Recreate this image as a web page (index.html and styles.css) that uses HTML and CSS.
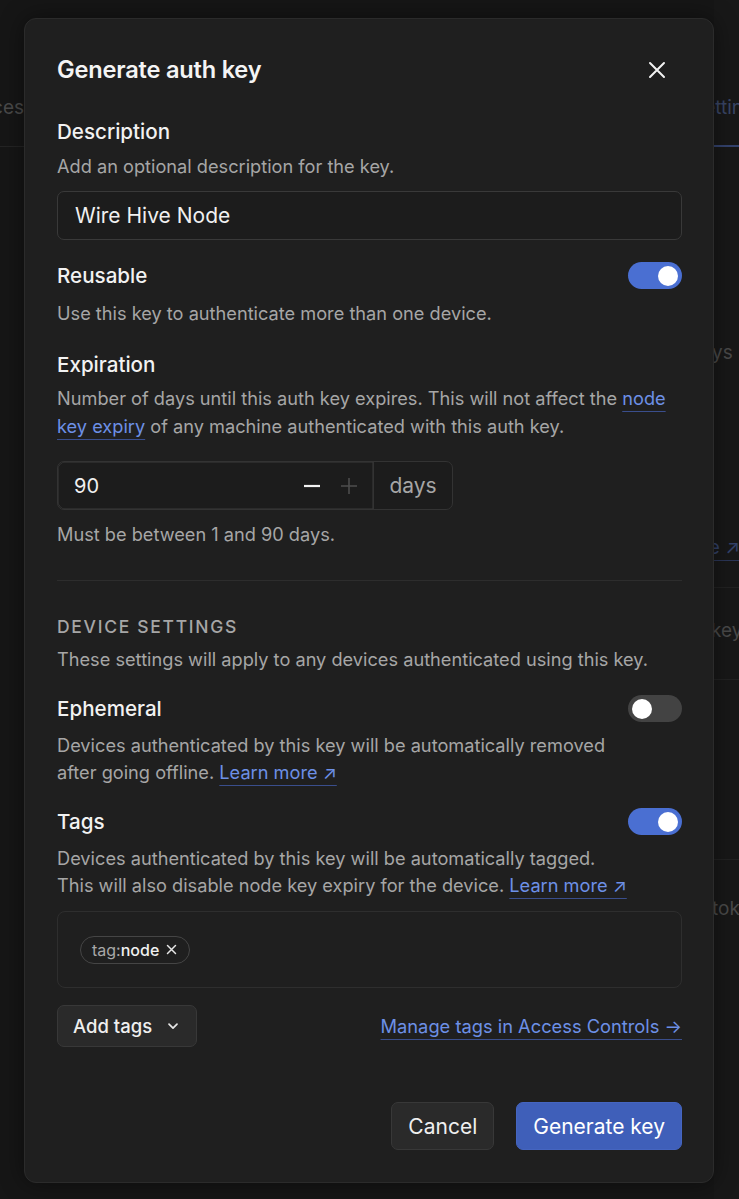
FILE: index.html
```html
<!DOCTYPE html>
<html lang="en">
<head>
<meta charset="utf-8">
<title>Generate auth key</title>
<link rel="stylesheet" href="styles.css">
</head>
<body>
<div class="page">
  <div class="side side-left">
    <div class="bg-tab">Devices</div>
    <div class="bg-rule"></div>
  </div>
  <div class="side side-right">
    <div class="bg-tab bg-tab-active">Settings</div>
    <div class="bg-active-bar"></div>
    <div class="bg-text bg-ys">days</div>
    <div class="bg-link">more ↗</div>
    <div class="bg-rule bg-rule-1"></div>
    <div class="bg-text bg-key">key</div>
    <div class="bg-rule bg-rule-2"></div>
    <div class="bg-rule bg-rule-3"></div>
    <div class="bg-text bg-tok">tok</div>
  </div>
</div>

<div class="modal" role="dialog">
  <div class="modal-header">
    <h1 class="modal-title">Generate auth key</h1>
    <button class="close-btn" aria-label="Close">
      <svg width="18" height="18" viewBox="0 0 18 18" fill="none" stroke="#f2f2f2" stroke-width="2" stroke-linecap="round"><path d="M2 2L16 16M16 2L2 16"/></svg>
    </button>
  </div>

  <section class="field field-desc">
    <div class="label">Description</div>
    <p class="help">Add an optional description for the key.</p>
    <div class="text-input">Wire Hive Node</div>
  </section>

  <section class="field field-reusable">
    <div class="row">
      <div class="label">Reusable</div>
      <span class="toggle on"><span class="knob"></span></span>
    </div>
    <p class="help">Use this key to authenticate more than one device.</p>
  </section>

  <section class="field field-exp">
    <div class="label">Expiration</div>
    <p class="help">Number of days until this auth key expires. This will not affect the <a class="link">node key expiry</a> of any machine authenticated with this auth key.</p>
    <div class="number-input">
      <div class="number-field">
        <span class="number-value">90</span>
        <span class="stepper">
          <svg class="minus" width="16" height="16" viewBox="0 0 16 16"><path d="M0 8H16" stroke="#f2f2f2" stroke-width="2.2"/></svg>
          <svg class="plus" width="16" height="16" viewBox="0 0 16 16"><path d="M0 8H16M8 0V16" stroke="#4d4d4d" stroke-width="1.6"/></svg>
        </span>
      </div>
      <div class="addon">days</div>
    </div>
    <p class="help help-after">Must be between 1 and 90 days.</p>
  </section>

  <hr class="divider">

  <section class="field field-device">
    <div class="overline">Device settings</div>
    <p class="help">These settings will apply to any devices authenticated using this key.</p>
  </section>

  <section class="field field-ephemeral">
    <div class="row">
      <div class="label">Ephemeral</div>
      <span class="toggle"><span class="knob"></span></span>
    </div>
    <p class="help help-wrap">Devices authenticated by this key will be automatically removed after going offline. <a class="link">Learn more ↗</a></p>
  </section>

  <section class="field field-tags">
    <div class="row">
      <div class="label">Tags</div>
      <span class="toggle on"><span class="knob"></span></span>
    </div>
    <p class="help">Devices authenticated by this key will be automatically tagged.<br>This will also disable node key expiry for the device. <a class="link">Learn more ↗</a></p>
    <div class="tag-box">
      <span class="chip"><span class="chip-prefix">tag:</span><span class="chip-name">node</span>
        <svg class="chip-x" width="11" height="11" viewBox="0 0 11 11" fill="none" stroke="#e6e6e6" stroke-width="1.5" stroke-linecap="round"><path d="M1.5 1.5L9.5 9.5M9.5 1.5L1.5 9.5"/></svg>
      </span>
    </div>
    <div class="tags-actions">
      <button class="btn btn-secondary btn-add">Add tags
        <svg width="14" height="14" viewBox="0 0 14 14" fill="none" stroke="#e6e6e6" stroke-width="1.7" stroke-linecap="round" stroke-linejoin="round"><path d="M3 5.2L7 9.2L11 5.2"/></svg>
      </button>
      <a class="link link-manage">Manage tags in Access Controls →</a>
    </div>
  </section>

  <div class="modal-footer">
    <button class="btn btn-secondary btn-lg">Cancel</button>
    <button class="btn btn-primary btn-lg">Generate key</button>
  </div>
</div>
</body>
</html>
```

FILE: styles.css
```css
* { box-sizing: border-box; }

html, body {
  margin: 0;
  padding: 0;
}

body {
  width: 739px;
  height: 1199px;
  overflow: hidden;
  background: #161616;
  font-family: Inter, "Noto Sans", "Liberation Sans", sans-serif;
  color: #f0f0f0;
  position: relative;
}

/* ---------- background page (dimmed) ---------- */
.page {
  display: flex;
  justify-content: space-between;
  height: 100%;
}

.side {
  overflow: hidden;
  white-space: nowrap;
  font-size: 19px;
  color: #4a4a4a;
}

.side-left {
  width: 24px;
  display: flex;
  flex-direction: column;
  align-items: flex-end;
}

.side-left .bg-tab {
  margin-top: 94px;
  line-height: 28px;
}

.side-left .bg-rule {
  align-self: stretch;
  margin-top: 24px;
  height: 1px;
  background: #242424;
}

.side-right {
  width: 25px;
  background: #181818;
}

.bg-tab-active {
  margin-top: 94px;
  line-height: 28px;
  margin-left: -22px;
  color: #3a4666;
}

.bg-active-bar {
  margin-top: 23px;
  height: 2px;
  background: #34436e;
}

.bg-text { line-height: 28px; }

.bg-ys { margin-top: 192px; margin-left: -24px; }

.bg-link {
  margin-top: 169px;
  margin-left: -40px;
  line-height: 24px;
  color: #33426a;
  border-bottom: 1px solid #2b3658;
  width: 90px;
}

.bg-rule { height: 1px; background: #222; }
.bg-rule-1 { margin-top: 26px; }
.bg-key { margin-top: 29px; margin-left: -3px; }
.bg-rule-2 { margin-top: 34px; }
.bg-rule-3 { margin-top: 179px; }
.bg-tok { margin-top: 35px; margin-left: -2px; }

/* ---------- modal ---------- */
.modal {
  position: absolute;
  left: 24px;
  top: 18px;
  width: 690px;
  height: 1165px;
  background: #1f1f1f;
  border: 1px solid #2b2b2b;
  border-radius: 12px;
  padding: 0 31px 0 32px;
  display: flex;
  flex-direction: column;
  box-shadow: 0 0 24px rgba(0, 0, 0, 0.45);
}

.modal-header {
  display: flex;
  align-items: center;
  justify-content: space-between;
  padding-top: 37px;
}

.modal-title {
  margin: 0;
  font-size: 23.6px;
  line-height: 28px;
  font-weight: 600;
  color: #f4f4f4;
  letter-spacing: -0.2px;
}

.close-btn {
  background: none;
  border: 0;
  padding: 0;
  width: 18px;
  height: 18px;
  margin-right: 16px;
  display: flex;
}

.label {
  font-size: 20.6px;
  line-height: 26px;
  font-weight: 500;
  color: #f2f2f2;
}

.help {
  margin: 0;
  font-size: 18.2px;
  line-height: 28px;
  color: #a6a6a6;
}

.link {
  color: #6d90e6;
  text-decoration: underline;
  text-decoration-color: #3a4e8c;
  text-underline-offset: 6px;
  text-decoration-thickness: 1px;
}

.field-desc { margin-top: 35px; }
.field-desc .help { margin-top: 7px; }

.text-input {
  margin-top: 11px;
  height: 49px;
  border: 1px solid #393939;
  border-radius: 7px;
  background: #1c1c1c;
  padding: 0 17px;
  display: flex;
  align-items: center;
  font-size: 21px;
  color: #f0f0f0;
}

.row {
  display: flex;
  align-items: center;
  justify-content: space-between;
  height: 27px;
}

.toggle {
  width: 54px;
  height: 27px;
  border-radius: 14px;
  background: #434343;
  padding: 0 4px;
  display: flex;
  align-items: center;
  justify-content: flex-start;
}

.toggle.on {
  background: #4a6fd2;
  justify-content: flex-end;
}

.knob {
  width: 20px;
  height: 20px;
  border-radius: 50%;
  background: #ffffff;
}

.field-reusable { margin-top: 22px; }
.field-reusable .help { margin-top: 10px; }

.field-exp { margin-top: 25px; }
.field-exp .help { margin-top: 6px; }

.number-input {
  margin-top: 21px;
  width: 396px;
  height: 49px;
  display: flex;
  border: 1px solid #333;
  border-radius: 7px;
  background: #1c1c1c;
}

.number-field {
  flex: 1;
  display: flex;
  align-items: center;
  justify-content: space-between;
  padding: 0 16px 0 16px;
  border-right: 1px solid #333;
  border-radius: 7px 0 0 7px;
  box-shadow: inset 0 0 0 0.5px #3a3a3a;
}

.number-value {
  font-size: 20px;
  color: #f0f0f0;
}

.stepper {
  display: flex;
  align-items: center;
  gap: 21px;
}

.addon {
  width: 78px;
  display: flex;
  align-items: center;
  justify-content: center;
  font-size: 21px;
  color: #a6a6a6;
}

.help-after { margin-top: 10px !important; }

.divider {
  margin: 32px 0 0;
  border: 0;
  height: 1px;
  background: #2d2d2d;
}

.field-device { margin-top: 34px; }

.overline {
  font-size: 17.5px;
  line-height: 24px;
  letter-spacing: 1.7px;
  text-transform: uppercase;
  color: #a6a6a6;
  font-weight: 500;
}

.field-device .help { margin-top: 6px; }

.field-ephemeral { margin-top: 22px; }
.field-ephemeral .help { margin-top: 10px; line-height: 27px; }

.help-wrap { max-width: 565px; }

.field-tags { margin-top: 22px; }
.field-tags .help { margin-top: 10px; line-height: 27px; }

.tag-box {
  margin-top: 12px;
  height: 77px;
  border: 1px solid #2e2e2e;
  border-radius: 8px;
  padding: 0 22px;
  display: flex;
  align-items: center;
}

.chip {
  display: inline-flex;
  align-items: center;
  height: 28px;
  padding: 0 12px 0 11px;
  border: 1px solid #454545;
  border-radius: 14px;
  font-size: 16px;
}

.chip-prefix { color: #a8a8a8; }
.chip-name { color: #f0f0f0; font-weight: 500; }
.chip-x { margin-left: 7px; }

.tags-actions {
  margin-top: 17px;
  display: flex;
  align-items: center;
  justify-content: space-between;
}

.btn {
  font-family: inherit;
  border-radius: 7px;
  cursor: pointer;
  display: inline-flex;
  align-items: center;
  justify-content: center;
}

.btn-secondary {
  background: #2a2a2a;
  border: 1px solid #383838;
  color: #efefef;
}

.btn-add {
  height: 42px;
  padding: 0 16px 0 15px;
  font-size: 18.5px;
  font-weight: 500;
  gap: 14px;
}

.link-manage {
  font-size: 18.3px;
  text-underline-offset: 6px;
}

.modal-footer {
  margin-top: auto;
  margin-bottom: 32px;
  display: flex;
  justify-content: flex-end;
  gap: 22px;
}

.btn-lg {
  height: 48px;
  font-size: 21px;
  padding: 0 16px;
}

.btn-primary {
  background: #3f5fb9;
  border: 1px solid #4565c0;
  color: #ffffff;
}
```
